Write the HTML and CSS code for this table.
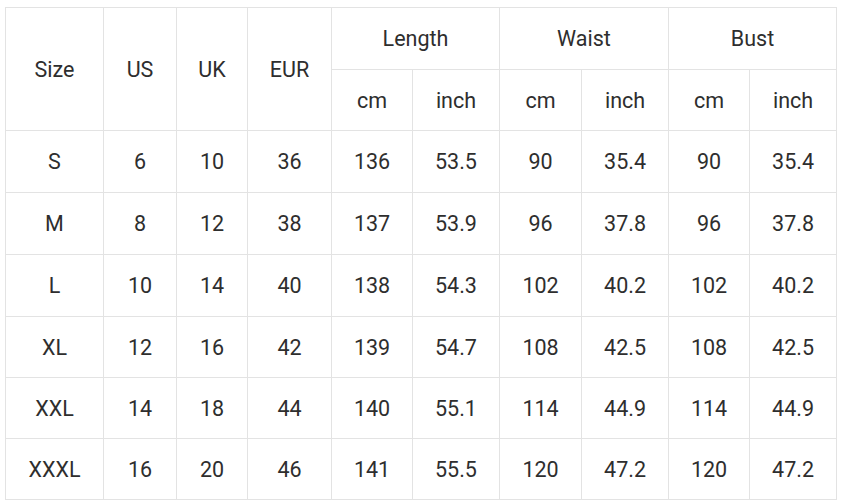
FILE: index.html
```html
<!DOCTYPE html>
<html>
<head>
<meta charset="utf-8">
<link rel="stylesheet" href="styles.css">
</head>
<body>
<table class="size-table">
  <colgroup>
    <col class="c1"><col class="c2"><col class="c3"><col class="c4">
    <col class="c5"><col class="c6"><col class="c7"><col class="c8">
    <col class="c9"><col class="c10">
  </colgroup>
  <thead>
    <tr class="h1">
      <th rowspan="2">Size</th>
      <th rowspan="2">US</th>
      <th rowspan="2">UK</th>
      <th rowspan="2">EUR</th>
      <th colspan="2">Length</th>
      <th colspan="2">Waist</th>
      <th colspan="2">Bust</th>
    </tr>
    <tr class="h2">
      <th>cm</th><th>inch</th><th>cm</th><th>inch</th><th>cm</th><th>inch</th>
    </tr>
  </thead>
  <tbody>
    <tr class="r62"><td>S</td><td>6</td><td>10</td><td>36</td><td>136</td><td>53.5</td><td>90</td><td>35.4</td><td>90</td><td>35.4</td></tr>
    <tr class="r62"><td>M</td><td>8</td><td>12</td><td>38</td><td>137</td><td>53.9</td><td>96</td><td>37.8</td><td>96</td><td>37.8</td></tr>
    <tr class="r62"><td>L</td><td>10</td><td>14</td><td>40</td><td>138</td><td>54.3</td><td>102</td><td>40.2</td><td>102</td><td>40.2</td></tr>
    <tr class="r61"><td>XL</td><td>12</td><td>16</td><td>42</td><td>139</td><td>54.7</td><td>108</td><td>42.5</td><td>108</td><td>42.5</td></tr>
    <tr class="r61"><td>XXL</td><td>14</td><td>18</td><td>44</td><td>140</td><td>55.1</td><td>114</td><td>44.9</td><td>114</td><td>44.9</td></tr>
    <tr class="r61"><td>XXXL</td><td>16</td><td>20</td><td>46</td><td>141</td><td>55.5</td><td>120</td><td>47.2</td><td>120</td><td>47.2</td></tr>
  </tbody>
</table>
</body>
</html>
```
FILE: styles.css
```css
html, body {
  margin: 0;
  padding: 0;
  background: #ffffff;
}
body {
  padding: 7px 0 0 5px;
  font-family: Roboto, "Liberation Sans", Arial, sans-serif;
}
.size-table {
  border-collapse: collapse;
  table-layout: fixed;
  width: 832px;
  font-size: 21.5px;
  color: #2e2e2e;
}
.size-table th,
.size-table td {
  border: 1px solid #e3e3e3;
  padding: 0;
  text-align: center;
  vertical-align: middle;
  font-weight: normal;
}
.c1 { width: 98px; }
.c2 { width: 73px; }
.c3 { width: 71px; }
.c4 { width: 84px; }
.c5 { width: 81px; }
.c6 { width: 87px; }
.c7 { width: 82px; }
.c8 { width: 87px; }
.c9 { width: 81px; }
.c10 { width: 87px; }
.h1 { height: 62px; }
.h2 { height: 61px; }
.r62 { height: 62px; }
.r61 { height: 61px; }
```
